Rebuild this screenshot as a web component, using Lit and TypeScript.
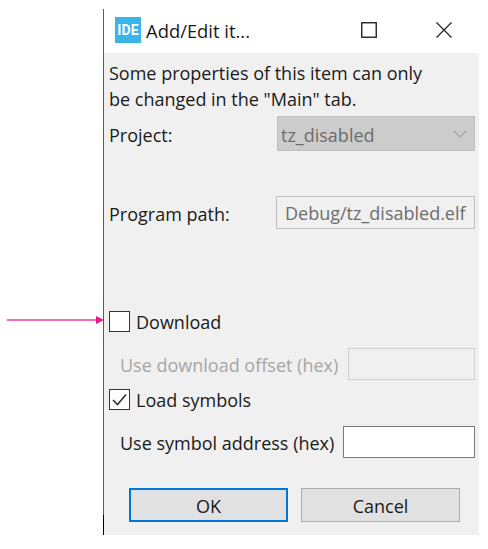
import { LitElement, html, css } from "lit";
import { customElement } from "lit/decorators.js";

@customElement("app-root")
export class AppRoot extends LitElement {
  static styles = css`
    :host { display: block; width: 488px; height: 549px; background: #fff; position: relative; overflow: hidden;
      font-family: "Open Sans", "Noto Sans", sans-serif; font-size: 18px; color: #1a1a1a; }
    .dialog { box-sizing: border-box; margin: 9px 0 0 103px; width: 376px; height: 526px; border-left: 1px solid #555; border-image: linear-gradient(to bottom, #5a5a5a 0, #5a5a5a 96%, #000 96%, #000 100%) 1; display: flex; flex-direction: column; background: #f0f0f0; }
    .title { height: 44px; flex: none; background: #fff; display: flex; align-items: center; padding: 0 0 0 11px; gap: 5px; }
    .logo { width: 26px; height: 26px; background: #3bb4e8; color: #fff; font: bold 14px Roboto, sans-serif; display: flex; align-items: center; justify-content: center; letter-spacing: .2px; margin-top: -2px; }
    .title-text { flex: 1; font-size: 18.4px; margin-top: -1px; }
    .win { display: flex; margin-top: -3px; }
    .win svg { display: block; }
    .max { margin-right: 59px; }
    .close { margin-right: 27px; }
    .body { flex: 1; display: flex; flex-direction: column; padding: 7px 4px 0 5px; }
    .msg { line-height: 26px; margin: 0; height: 52px; }
    .row { display: flex; align-items: center; }
    .row > span, .select > span { padding-top: 2px; }
    .project { margin-top: 4px; height: 35px; }
    .program { margin-top: 45px; height: 33px; }
    .download { margin-top: 81px; height: 22px; }
    .offset { margin-top: 16px; height: 32px; padding-left: 11px; }
    .load { margin-top: 8px; height: 22px; }
    .symbol { margin-top: 16px; height: 32px; padding-left: 11px; }
    .lead { flex: 1; }
    .select { box-sizing: border-box; width: 198px; height: 35px; background: #cccccc; border: 1px solid #bfbfbf; color: #6d6d6d; display: flex; align-items: center; justify-content: space-between; padding: 0 7px 0 3px; }
    .field { box-sizing: border-box; height: 100%; border: 1px solid #bfbfbf; background: #f0f0f0; color: #6d6d6d; display: flex; align-items: center; padding: 0 8px; white-space: nowrap; }
    .field.path { width: 199px; }
    .field.off { width: 127px; border-color: #d0d0d0; }
    .field.sym { width: 132px; background: #fff; border-color: #7a7a7a; }
    .disabled { color: #a6a6a6; }
    .check { box-sizing: border-box; width: 21px; height: 21px; border: 1px solid #333; background: #fff; margin-right: 6px; display: flex; align-items: center; justify-content: center; flex: none; }
    .buttons { display: flex; gap: 13px; margin: 30px 0 0 20px; }
    .btn { box-sizing: border-box; width: 159px; height: 34px; padding-top: 2px; background: #e1e1e1; border: 1px solid #adadad; display: flex; align-items: center; justify-content: center; }
    .btn.default { border: 2px solid #0078d7; }
    .arrow { position: absolute; left: 7px; top: 313px; display: block; }
  `;

  render() {
    return html`
      <div class="dialog">
        <div class="title">
          <div class="logo">IDE</div>
          <div class="title-text">Add/Edit it...</div>
          <div class="win">
            <svg class="max" width="16" height="16" viewBox="0 0 16 16"><rect x=".75" y=".75" width="14.5" height="14.5" fill="none" stroke="#222" stroke-width="1.4"/></svg>
            <svg class="close" width="16" height="16" viewBox="0 0 16 16"><path d="M.5 .5L15.5 15.5M15.5 .5L.5 15.5" stroke="#222" stroke-width="1.2" fill="none"/></svg>
          </div>
        </div>
        <div class="body">
          <p class="msg">Some properties of this item can only<br />be changed in the "Main" tab.</p>
          <div class="row project">
            <span class="lead">Project:</span>
            <div class="select">
              <span>tz_disabled</span>
              <svg width="14" height="8" viewBox="0 0 14 8"><path d="M1 1L7 7L13 1" fill="none" stroke="#a3a3a3" stroke-width="1.2"/></svg>
            </div>
          </div>
          <div class="row program">
            <span class="lead">Program path:</span>
            <div class="field path">Debug/tz_disabled.elf</div>
          </div>
          <div class="row download">
            <div class="check"></div><span>Download</span>
          </div>
          <div class="row offset">
            <span class="lead disabled">Use download offset (hex)</span>
            <div class="field off"></div>
          </div>
          <div class="row load">
            <div class="check">
              <svg width="15" height="13" viewBox="0 0 15 13"><path d="M1 7L5.5 11.5L14 1.5" fill="none" stroke="#333" stroke-width="1.6"/></svg>
            </div><span>Load symbols</span>
          </div>
          <div class="row symbol">
            <span class="lead">Use symbol address (hex)</span>
            <div class="field sym"></div>
          </div>
          <div class="buttons">
            <div class="btn default">OK</div>
            <div class="btn">Cancel</div>
          </div>
        </div>
      </div>
      <svg class="arrow" width="97" height="14" viewBox="0 0 97 14">
        <path d="M0 7H90" stroke="#ee3c96" stroke-width="1.4"/>
        <path d="M89 3L97 7L89 11Z" fill="#e6168c"/>
      </svg>
    `;
  }
}
